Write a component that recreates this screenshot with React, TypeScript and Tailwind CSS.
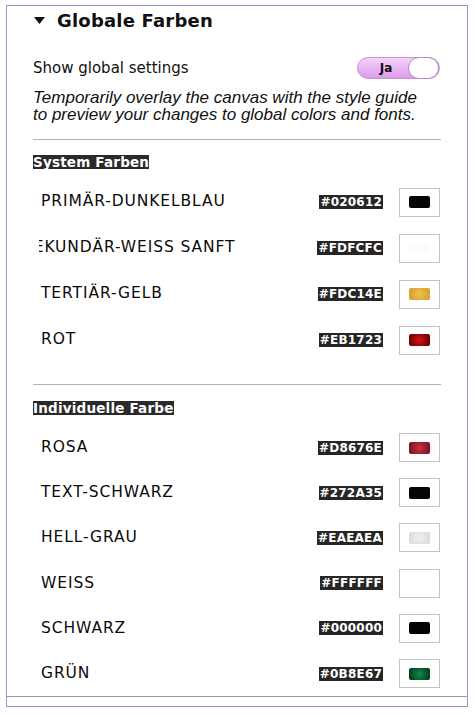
import React from "react";

type Swatch = {
  name: string;
  hex: string;
  fill: string;
  shift?: string;
};

const systemColors: Swatch[] = [
  { name: "PRIMÄR-DUNKELBLAU", hex: "#020612", fill: "bg-[#050505]" },
  {
    name: "SEKUNDÄR-WEISS SANFT",
    hex: "#FDFCFC",
    fill: "bg-[#fdfcfc]",
    shift: "-ml-[18px]",
  },
  {
    name: "TERTIÄR-GELB",
    hex: "#FDC14E",
    fill: "bg-[radial-gradient(circle,#f0c050,#d49a2c)]",
  },
  {
    name: "ROT",
    hex: "#EB1723",
    fill: "bg-[radial-gradient(circle,#d81010,#5a0000)]",
  },
];

const customColors: Swatch[] = [
  {
    name: "ROSA",
    hex: "#D8676E",
    fill: "bg-[radial-gradient(circle,#c83040,#701018)]",
  },
  { name: "TEXT-SCHWARZ", hex: "#272A35", fill: "bg-[#050505]" },
  {
    name: "HELL-GRAU",
    hex: "#EAEAEA",
    fill: "bg-[radial-gradient(circle,#f0f0f0,#d8d8d8)]",
  },
  { name: "WEISS", hex: "#FFFFFF", fill: "bg-white" },
  { name: "SCHWARZ", hex: "#000000", fill: "bg-[#030303]" },
  {
    name: "GRÜN",
    hex: "#0B8E67",
    fill: "bg-[radial-gradient(circle,#128a4a,#03301a)]",
  },
];

const ColorRow = ({ color, height }: { color: Swatch; height: string }) => (
  <div className={`flex items-center pl-[6px] ${height}`}>
    <div className="flex min-w-0 flex-1 overflow-hidden">
      <span
        className={`whitespace-nowrap pl-[2px] text-[15.5px] tracking-[0.9px] text-[#0a0a0a] ${
          color.shift ?? ""
        }`}
      >
        {color.name}
      </span>
    </div>
    <span className="bg-[#262626] px-px text-[12px] leading-[14px] font-bold tracking-[0.2px] text-white">
      {color.hex}
    </span>
    <div className="ml-[16px] mr-px flex h-[29px] w-[41px] shrink-0 items-center justify-center border border-[#c4c4c4] bg-white">
      <div className={`h-[12px] w-[21px] rounded-[2px] ${color.fill}`} />
    </div>
  </div>
);

const GroupLabel = ({ children }: { children: React.ReactNode }) => (
  <div className="flex">
    <span className="bg-[#2a2a2a] text-[13.5px] leading-[14px] font-bold tracking-[0.2px] text-white">
      {children}
    </span>
  </div>
);

export default function App() {
  return (
    <div className="min-h-screen bg-white pt-[5px] pl-[6px] font-['DejaVu_Sans',sans-serif]">
      <div className="w-[462px] border border-[#8a9bd5] bg-white pb-[9px]">
        <div className="border-b border-[#9a9a9a] pr-[26px] pl-[26px]">
          <div className="flex h-[24px] items-center pt-[4px]">
            <svg width="11" height="7" viewBox="0 0 11 7" className="ml-[1px]">
              <path d="M0 0h11L5.5 7z" fill="#111" />
            </svg>
            <span className="ml-[12px] text-[18px] font-bold tracking-[0.2px] text-[#111]">
              Globale Farben
            </span>
          </div>

          <div className="mt-[27px] flex h-[22px] items-center justify-between">
            <span className="text-[15px] text-[#111]">Show global settings</span>
            <div className="mr-px flex h-[22px] w-[83px] items-center rounded-full border border-[#c793d2] bg-[linear-gradient(to_bottom,#f6d2fa,#dc9ae9)]">
              <span className="flex-1 pl-[6px] text-center text-[12px] font-bold text-[#111]">
                Ja
              </span>
              <div className="h-[22px] w-[31px] rounded-full border border-[#b88bc4] bg-white" />
            </div>
          </div>

          <p className="mt-[10px] pr-[12px] font-['Liberation_Sans',sans-serif] text-[17px] leading-[17px] italic text-[#111]">
            Temporarily overlay the canvas with the style guide to preview your
            changes to global colors and fonts.
          </p>

          <div className="mt-[16px] border-t border-[#b4b4b4]" />

          <div className="mt-[15px]">
            <GroupLabel>System Farben</GroupLabel>
          </div>
          <div className="mt-[10px]">
            {systemColors.map((c) => (
              <ColorRow key={c.name} color={c} height="h-[46px]" />
            ))}
          </div>

          <div className="mt-[21px] border-t border-[#b4b4b4]" />

          <div className="mt-[16px]">
            <GroupLabel>Individuelle Farbe</GroupLabel>
          </div>
          <div className="mt-[10px]">
            {customColors.map((c) => (
              <ColorRow key={c.name} color={c} height="h-[45.2px]" />
            ))}
          </div>
        </div>
      </div>
    </div>
  );
}
